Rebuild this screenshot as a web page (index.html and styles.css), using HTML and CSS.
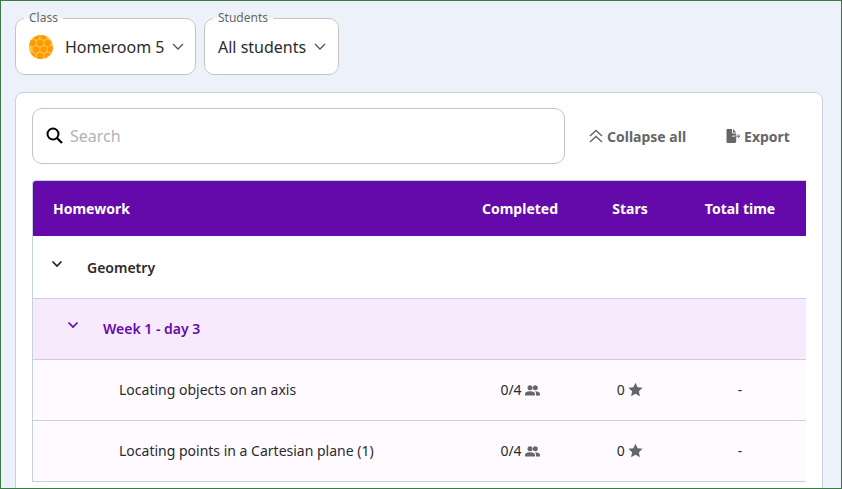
FILE: index.html
```html
<!DOCTYPE html>
<html lang="en">
<head>
<meta charset="utf-8">
<title>Homework</title>
<link rel="stylesheet" href="styles.css">
</head>
<body>
<div class="frame">
  <div class="filters">
    <fieldset class="select select-class">
      <legend>Class</legend>
      <svg class="class-logo" width="24" height="24" viewBox="0 0 24 24">
        <defs><clipPath id="c"><circle cx="12" cy="12" r="12"/></clipPath></defs>
        <circle cx="12" cy="12" r="12" fill="#ffc040"/>
        <g clip-path="url(#c)" fill="#ff9a00" stroke="#ffc24a" stroke-width=".8">
          <path d="M7 -2.500l3.500 2v4l-3.500 2-3.500-2v-4z"/><path d="M14.500 -2.500l3.500 2v4l-3.500 2-3.500-2v-4z"/>
          <path d="M3.500 4l3.500 2v4l-3.500 2L0 10V6z"/><path d="M11 4l3.500 2v4l-3.500 2-3.500-2V6z"/><path d="M18.500 4l3.500 2v4l-3.500 2-3.500-2V6z"/>
          <path d="M7 10.500l3.500 2v4l-3.500 2-3.500-2v-4z"/><path d="M14.500 10.500l3.500 2v4l-3.500 2-3.500-2v-4z"/><path d="M22 10.500l3.500 2v4l-3.500 2-3.500-2v-4z"/>
          <path d="M3.500 17l3.500 2v4l-3.500 2L0 23v-4z"/><path d="M11 17l3.500 2v4l-3.500 2-3.500-2v-4z"/><path d="M18.500 17l3.500 2v4l-3.500 2-3.500-2v-4z"/>
        </g>
      </svg>
      <span class="select-value">Homeroom 5</span>
      <svg class="caret" width="12" height="7" viewBox="0 0 12 7"><path d="M1 1l5 5 5-5" fill="none" stroke="#555" stroke-width="1.300"/></svg>
    </fieldset>
    <fieldset class="select select-students">
      <legend>Students</legend>
      <span class="select-value">All students</span>
      <svg class="caret" width="12" height="7" viewBox="0 0 12 7"><path d="M1 1l5 5 5-5" fill="none" stroke="#555" stroke-width="1.300"/></svg>
    </fieldset>
  </div>
  <section class="panel">
    <div class="toolbar">
      <label class="search">
        <svg width="18" height="18" viewBox="0 0 18 18"><circle cx="7" cy="7" r="5.500" fill="none" stroke="#000" stroke-width="2"/><path d="M11 11l5 5" stroke="#000" stroke-width="2.200"/></svg>
        <span class="placeholder">Search</span>
      </label>
      <button class="action action-collapse">
        <svg width="14" height="14" viewBox="0 0 14 14"><path d="M1 7L7 1.500 13 7M1 13l6-5.500 6 5.500" fill="none" stroke="#666" stroke-width="1.500"/></svg>
        Collapse all
      </button>
      <button class="action action-export">
        <svg width="15" height="14" viewBox="0 0 15 14"><path d="M0.500 1.200C0.500.5 1 0 1.700 0H6v3.600C6 4 6.400 4.400 6.800 4.400H10.200V6.500H6.500V8h3.700v4.800c0 .7-.5 1.200-1.200 1.200H1.700C1 14 .5 13.500 .5 12.800z M7 0l3.200 3.400H7z" fill="#666"/><path d="M7.500 7.200h6M11.800 5.300l2 1.900-2 1.900" fill="none" stroke="#666" stroke-width="1"/></svg>
        Export
      </button>
    </div>
    <div class="table-wrap">
      <table>
        <colgroup><col class="col-name"><col class="col-num"><col class="col-num"><col class="col-num"><col class="col-rest"></colgroup>
        <thead>
          <tr><th class="name">Homework</th><th>Completed</th><th>Stars</th><th>Total time</th><th></th></tr>
        </thead>
        <tbody>
          <tr class="row-subject">
            <td class="name" colspan="5"><svg class="toggle" width="12" height="8" viewBox="0 0 12 8"><path d="M1.500 1.500L6 6l4.500-4.500" fill="none" stroke="#222" stroke-width="1.700"/></svg>Geometry</td>
          </tr>
          <tr class="row-group">
            <td class="name" colspan="5"><svg class="toggle" width="12" height="8" viewBox="0 0 12 8"><path d="M1.500 1.500L6 6l4.500-4.500" fill="none" stroke="#650aaa" stroke-width="1.700"/></svg>Week 1 - day 3</td>
          </tr>
          <tr class="row-item">
            <td class="name">Locating objects on an axis</td>
            <td class="completed"><span class="count">0/4</span><svg class="people" width="15" height="11" viewBox="0 0 15 11"><g fill="#666"><circle cx="5" cy="2.800" r="2.500"/><circle cx="10.300" cy="2.800" r="2.500"/><path d="M0 10.500V8.800C0 7.200 2.800 6.300 5 6.300s5 .9 5 2.500v1.700z"/><path d="M11 10.500V8.600c0-.9-.4-1.700-1-2.300 2.200-.1 5 .8 5 2.500v1.700z"/></g></svg></td>
            <td class="stars">0 <svg class="star" width="15" height="15" viewBox="0 0 24 24"><path fill="#666" d="M12 1l3.400 7.400 8 .9-6 5.400 1.700 8L12 18.700 4.900 22.700l1.700-8-6-5.400 8-.9z"/></svg></td>
            <td>-</td><td></td>
          </tr>
          <tr class="row-item">
            <td class="name">Locating points in a Cartesian plane (1)</td>
            <td class="completed"><span class="count">0/4</span><svg class="people" width="15" height="11" viewBox="0 0 15 11"><g fill="#666"><circle cx="5" cy="2.800" r="2.500"/><circle cx="10.300" cy="2.800" r="2.500"/><path d="M0 10.500V8.800C0 7.200 2.800 6.300 5 6.300s5 .9 5 2.500v1.700z"/><path d="M11 10.500V8.600c0-.9-.4-1.700-1-2.300 2.200-.1 5 .8 5 2.500v1.700z"/></g></svg></td>
            <td class="stars">0 <svg class="star" width="15" height="15" viewBox="0 0 24 24"><path fill="#666" d="M12 1l3.400 7.400 8 .9-6 5.400 1.700 8L12 18.700 4.900 22.700l1.700-8-6-5.400 8-.9z"/></svg></td>
            <td>-</td><td></td>
          </tr>
        </tbody>
      </table>
    </div>
  </section>
</div>
</body>
</html>
```
FILE: styles.css
```css
* { box-sizing: border-box; }
html, body { margin: 0; height: 100%; }
body { font-family: "Noto Sans", sans-serif; color: #2b2b2e; }
.frame {
  height: 489px;
  border: 1px solid #3a7a46;
  background: #edf2fa;
  padding: 10px 18px 0 14px;
  overflow: hidden;
}
.filters { display: flex; gap: 8px; }
.select {
  margin: 0;
  height: 64px;
  padding: 0 13px;
  border: 1px solid #c4c4c4;
  border-radius: 10px;
  background: #fff;
  display: flex;
  align-items: center;
  min-width: 0;
}
.select legend {
  padding: 0 5px;
  margin-left: -5px;
  font-size: 12px;
  line-height: 14px;
  color: #666;
}
.select-class { width: 181px; }
.select-students { width: 135px; }
.class-logo { margin-right: 12px; flex: none; }
.select-value { font-size: 16px; line-height: 22px; white-space: nowrap; margin-top: -6px; }
.select .class-logo, .select .caret { margin-top: -6px; }
.caret { margin-left: 8px; flex: none; }
.panel {
  margin-top: 17px;
  height: 420px;
  background: #fff;
  border: 1px solid #c5d1df;
  border-radius: 8px;
  padding: 15px 16px 0;
}
.toolbar { display: flex; align-items: center; height: 56px; }
.search {
  width: 533px;
  height: 56px;
  border: 1px solid #c4c4c4;
  border-radius: 10px;
  display: flex;
  align-items: center;
  gap: 6px;
  padding-left: 13px;
}
.placeholder { font-size: 16px; color: #b3b3b3; }
.action {
  border: 0;
  background: none;
  padding: 0;
  font: 700 14px "Noto Sans", sans-serif;
  color: #666;
  display: flex;
  align-items: center;
  gap: 4px;
  white-space: nowrap;
}
.action-collapse { margin-left: 24px; }
.action-export { margin-left: 40px; }
.action-export svg { margin-right: -1px; }
.table-wrap {
  margin-top: 16px;
  width: 774px;
  overflow: hidden;
  border-left: 1px solid #c5d1df;
  border-radius: 4px 0 0 0;
  border-top: 1px solid #c5d1df;
}
table { border-collapse: separate; border-spacing: 0; table-layout: fixed; width: 773px; font-size: 14px; }
.col-name { width: 432px; }
.col-num { width: 110px; }
.col-rest { width: 11px; }
th {
  height: 55px;
  padding: 0;
  background: #650aaa;
  color: #fff;
  font-weight: 700;
  font-size: 14px;
  text-align: center;
}
th.name { text-align: left; padding-left: 20px; }
td { padding: 0; text-align: center; border-bottom: 1px solid #c5d1df; white-space: nowrap; }
td.name { text-align: left; }
.toggle { margin-right: 24px; position: relative; top: -5px; }
.row-subject td { height: 63px; padding-left: 18px; font-weight: 600; background: #fff; }
.row-group td { height: 61px; padding-left: 34px; padding-bottom: 2px; font-weight: 600; color: #650aaa; background: #f7eafc; }
.row-item td { height: 61px; padding-bottom: 2px; background: #fefaff; }
.row-item td.name { padding-left: 86px; padding-bottom: 2px; }
.count { margin-right: 3px; }
.people { vertical-align: -1px; }
.star { vertical-align: -2px; }
```
